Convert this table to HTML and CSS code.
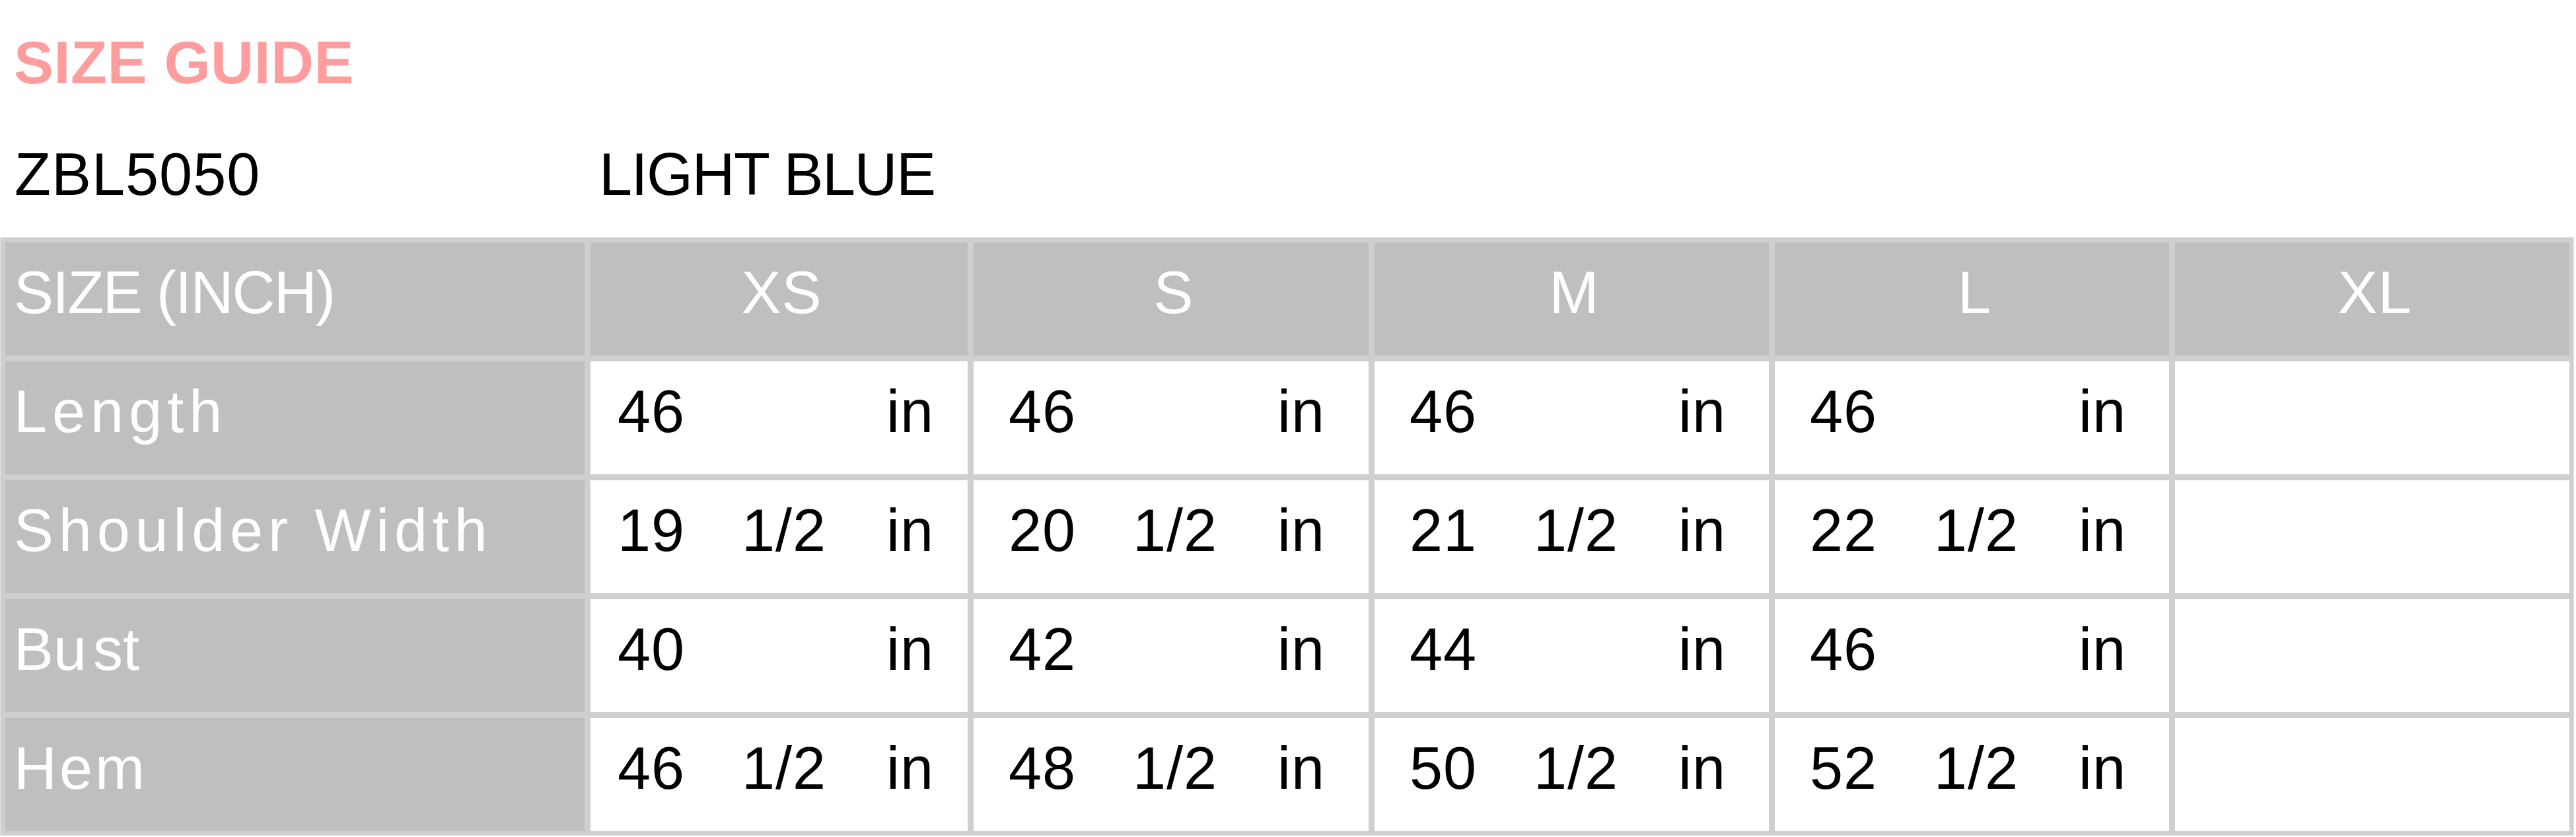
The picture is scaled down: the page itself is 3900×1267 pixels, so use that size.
FILE: index.html
```html
<!DOCTYPE html>
<html lang="en">
<head>
<meta charset="utf-8">
<title>Size Guide</title>
<link rel="stylesheet" href="styles.css">
</head>
<body>
<div class="page">
  <h1 class="title">SIZE GUIDE</h1>
  <div class="product">
    <span class="code">ZBL5050</span>
    <span class="color">LIGHT BLUE</span>
  </div>
  <div class="chart">
    <div class="cell head label tight">SIZE (INCH)</div>
    <div class="cell head">XS</div>
    <div class="cell head">S</div>
    <div class="cell head">M</div>
    <div class="cell head">L</div>
    <div class="cell head">XL</div>

    <div class="cell label wide">Length</div>
    <div class="cell val first"><span>46</span><span></span><span>in</span></div>
    <div class="cell val"><span>46</span><span></span><span>in</span></div>
    <div class="cell val"><span>46</span><span></span><span>in</span></div>
    <div class="cell val"><span>46</span><span></span><span>in</span></div>
    <div class="cell val"></div>

    <div class="cell label wider">Shoulder Width</div>
    <div class="cell val first"><span>19</span><span>1/2</span><span>in</span></div>
    <div class="cell val"><span>20</span><span>1/2</span><span>in</span></div>
    <div class="cell val"><span>21</span><span>1/2</span><span>in</span></div>
    <div class="cell val"><span>22</span><span>1/2</span><span>in</span></div>
    <div class="cell val"></div>

    <div class="cell label">Bu<span class="gap">st</span></div>
    <div class="cell val first"><span>40</span><span></span><span>in</span></div>
    <div class="cell val"><span>42</span><span></span><span>in</span></div>
    <div class="cell val"><span>44</span><span></span><span>in</span></div>
    <div class="cell val"><span>46</span><span></span><span>in</span></div>
    <div class="cell val"></div>

    <div class="cell label roomy">Hem</div>
    <div class="cell val first"><span>46</span><span>1/2</span><span>in</span></div>
    <div class="cell val"><span>48</span><span>1/2</span><span>in</span></div>
    <div class="cell val"><span>50</span><span>1/2</span><span>in</span></div>
    <div class="cell val"><span>52</span><span>1/2</span><span>in</span></div>
    <div class="cell val"></div>
  </div>
</div>
</body>
</html>
```

FILE: styles.css
```css
html, body {
  margin: 0;
  padding: 0;
  background: #ffffff;
}

body {
  font-family: "Liberation Sans", Arial, sans-serif;
  color: #000000;
}

.page {
  padding-top: 50px;
}

.title {
  margin: 0;
  padding-left: 21px;
  font-size: 90px;
  line-height: 90px;
  font-weight: bold;
  color: #ff9d9e;
  letter-spacing: 0.5px;
}

.product {
  display: flex;
  margin-top: 79px;
  font-size: 90px;
  line-height: 90px;
}

.code {
  width: 885px;
  padding-left: 22px;
  letter-spacing: 1px;
}

.color {
  letter-spacing: -1.5px;
}

.chart {
  display: grid;
  width: max-content;
  margin-top: 50px;
  grid-template-columns: 877px 571px 598px 597px 597px 597px;
  grid-auto-rows: 171px;
  gap: 9px;
  padding: 7px 6px 6px 7px;
  border: 1px solid #e3e3e3;
  background: #d0cfcf;
}

.cell {
  box-sizing: border-box;
  padding-top: 31px;
  font-size: 90px;
  line-height: 90px;
  background: #ffffff;
  white-space: nowrap;
}

.head {
  background: #bfbfbf;
  color: #ffffff;
  text-align: center;
  padding-left: 8px;
  letter-spacing: 1px;
}

.label {
  background: #bfbfbf;
  color: #ffffff;
  text-align: left;
  padding-left: 13px;
}

.tight {
  letter-spacing: -1.8px;
}

.wide {
  letter-spacing: 8px;
}

.wider {
  letter-spacing: 7.8px;
}

.roomy {
  letter-spacing: 4px;
}

.gap {
  margin-left: 10px;
}

.val {
  display: grid;
  grid-template-columns: 188px 219px auto;
  padding-left: 53px;
  letter-spacing: 1px;
}

.val.first {
  padding-left: 41px;
}
```
